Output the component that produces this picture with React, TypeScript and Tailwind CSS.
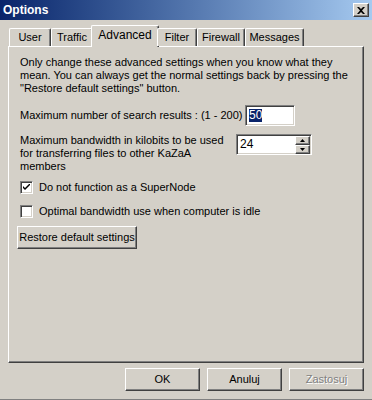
import { useState } from "react";

const tabs: [string, number][] = [
  ["User", 42],
  ["Traffic", 42],
  ["Advanced", 68],
  ["Filter", 40],
  ["Firewall", 48],
  ["Messages", 59],
];

const raised =
  "border border-t-white border-l-white border-r-[#404040] border-b-[#404040] shadow-[inset_-1px_-1px_0_#808080,inset_1px_1px_0_#d4d0c8]";
const sunken =
  "border border-t-[#808080] border-l-[#808080] border-r-white border-b-white shadow-[inset_1px_1px_0_#404040,inset_-1px_-1px_0_#d4d0c8]";

const Checkbox = ({ checked, label }: { checked: boolean; label: string }) => (
  <label className="flex items-center gap-[6px]">
    <span className={`flex h-[13px] w-[13px] items-center justify-center bg-white ${sunken}`}>
      {checked && (
        <svg width="7" height="7" viewBox="0 0 7 7">
          <path d="M0 2 L0 4 L2 6 L7 1 L7 -1 L2 4 Z" fill="#000" />
        </svg>
      )}
    </span>
    <span>{label}</span>
  </label>
);

const Button = ({ children, disabled, className = "" }: { children: React.ReactNode; disabled?: boolean; className?: string }) => (
  <button
    className={`h-[23px] bg-[#d4d0c8] ${raised} ${disabled ? "text-[#808080] [text-shadow:1px_1px_0_#fff]" : "text-black"} ${className}`}
  >
    {children}
  </button>
);

export default function App() {
  const [active] = useState("Advanced");

  return (
    <div
      className="h-[400px] w-[372px] overflow-hidden border-b border-b-[#808080] bg-[#d4d0c8] text-[11px] leading-[13px] text-black"
      style={{ fontFamily: '"Liberation Sans", Arial, sans-serif' }}
    >
      {/* title bar */}
      <div className="flex h-[20px] items-center justify-between bg-gradient-to-r from-[#0a246a] to-[#a6caf0] pl-[3px] pr-[3px]">
        <span className="text-[12px] font-bold text-white">Options</span>
        <button className={`flex h-[14px] w-[16px] items-center justify-center bg-[#d4d0c8] ${raised}`}>
          <svg width="8" height="7" viewBox="0 0 8 7">
            <path d="M0 0 L2 0 L4 2 L6 0 L8 0 L5 3.5 L8 7 L6 7 L4 5 L2 7 L0 7 L3 3.5 Z" fill="#000" />
          </svg>
        </button>
      </div>

      <div className="px-[8px] pt-[6px]">
        {/* tabs */}
        <div className="relative z-10 flex h-[20px] items-end pl-[1px]">
          {tabs.map(([t, w]) => {
            const on = t === active;
            return (
              <div
                key={t}
                style={{ width: w }}
                className={`flex shrink-0 items-center justify-center rounded-t-[2px] border-l border-t border-r border-l-white border-t-white border-r-[#404040] bg-[#d4d0c8] shadow-[inset_-1px_0_0_#808080] ${
                  on ? "-mx-[2px] mb-[-1px] h-[22px] pb-[2px] text-[12px]" : "h-[18px]"
                }`}
              >
                {t}
              </div>
            );
          })}
        </div>

        {/* panel */}
        <div className={`h-[317px] bg-[#d4d0c8] px-[11px] pt-[9px] ${raised}`}>
          <p className="whitespace-nowrap">
            Only change these advanced settings when you know what they
            <br />
            mean. You can always get the normal settings back by pressing the
            <br />
            "Restore default settings" button.
          </p>

          <div className="mt-[10px] flex items-center">
            <span className="w-[225px]">Maximum number of search results : (1 - 200)</span>
            <div className={`flex h-[21px] w-[50px] items-center bg-white px-[3px] ${sunken}`}>
              <span className="bg-[#0a246a] text-[12px] text-white">50</span>
            </div>
          </div>

          <div className="mt-[8px] flex items-start">
            <span className="w-[216px]">
              Maximum bandwidth in kilobits to be used
              <br />
              for transferring files to other KaZaA
              <br />
              members
            </span>
            <div className={`flex h-[21px] w-[76px] items-center bg-white pl-[3px] ${sunken}`}>
              <span className="flex-1 text-[12px]">24</span>
              <div className="mr-[1px] flex flex-col">
                <span className={`flex h-[9px] w-[15px] items-center justify-center bg-[#d4d0c8] ${raised}`}>
                  <svg width="5" height="3" viewBox="0 0 5 3">
                    <path d="M2.5 0 L5 3 L0 3 Z" fill="#000" />
                  </svg>
                </span>
                <span className={`flex h-[9px] w-[15px] items-center justify-center bg-[#d4d0c8] ${raised}`}>
                  <svg width="5" height="3" viewBox="0 0 5 3">
                    <path d="M0 0 L5 0 L2.5 3 Z" fill="#000" />
                  </svg>
                </span>
              </div>
            </div>
          </div>

          <div className="mt-[8px] flex flex-col gap-[11px]">
            <Checkbox checked label="Do not function as a SuperNode" />
            <Checkbox checked={false} label="Optimal bandwidth use when computer is idle" />
          </div>

          <Button className="-ml-[3px] mt-[8px] w-[120px]">Restore default settings</Button>
        </div>

        {/* bottom buttons */}
        <div className="mt-[5px] flex justify-end gap-[7px]">
          <Button className="w-[75px]">OK</Button>
          <Button className="w-[75px]">Anuluj</Button>
          <Button className="w-[75px]" disabled>
            Zastosuj
          </Button>
        </div>
      </div>
    </div>
  );
}
